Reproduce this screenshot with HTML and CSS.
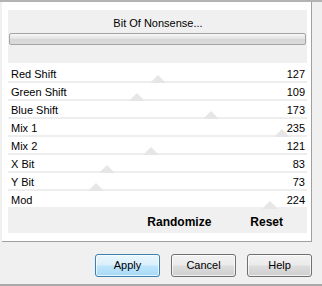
FILE: index.html
```html
<!DOCTYPE html>
<html>
<head>
<meta charset="utf-8">
<link rel="stylesheet" href="styles.css">
</head>
<body>
<div class="window">
  <div class="panel">
    <div class="head">
      <div class="title">Bit Of Nonsense...</div>
      <div class="progress"></div>
    </div>
    <div class="rows">
      <div class="row"><span class="thumb" style="left:142px"></span><span class="lbl">Red Shift</span><span class="val">127</span></div>
      <div class="row"><span class="thumb" style="left:121px"></span><span class="lbl">Green Shift</span><span class="val">109</span></div>
      <div class="row"><span class="thumb" style="left:195px"></span><span class="lbl">Blue Shift</span><span class="val">173</span></div>
      <div class="row"><span class="thumb" style="left:266px"></span><span class="lbl">Mix 1</span><span class="val">235</span></div>
      <div class="row"><span class="thumb" style="left:135px"></span><span class="lbl">Mix 2</span><span class="val">121</span></div>
      <div class="row"><span class="thumb" style="left:91px"></span><span class="lbl">X Bit</span><span class="val">83</span></div>
      <div class="row"><span class="thumb" style="left:80px"></span><span class="lbl">Y Bit</span><span class="val">73</span></div>
      <div class="row"><span class="thumb" style="left:254px"></span><span class="lbl">Mod</span><span class="val">224</span></div>
    </div>
    <div class="actions">
      <span class="act">Randomize</span>
      <span class="act">Reset</span>
    </div>
  </div>
  <div class="buttons">
    <div class="btn default">Apply</div>
    <div class="btn">Cancel</div>
    <div class="btn">Help</div>
  </div>
</div>
</body>
</html>
```

FILE: styles.css
```css
html, body {
  margin: 0;
  padding: 0;
  background: #f0f0f0;
}
body {
  font-family: "Liberation Sans", Arial, sans-serif;
  font-size: 11px;
  color: #000;
}
.window {
  width: 322px;
  height: 286px;
  box-sizing: border-box;
  border-top: 2px solid #b3b3b3;
  border-bottom: 2px solid #a9a9a9;
  overflow: hidden;
}
.panel {
  margin-left: 2px;
  width: 310px;
  height: 240px;
  box-sizing: border-box;
  background: #fff;
  border-right: 1px solid #a0a0a0;
  border-bottom: 1px solid #a0a0a0;
  padding: 8px 4px 0 6px;
}
.head {
  height: 53px;
  background: #f0f0f0;
  box-sizing: border-box;
  padding-top: 7px;
}
.title {
  text-align: center;
  line-height: 12px;
  height: 16px;
  padding-left: 1px;
}
.progress {
  margin: 0 1px;
  height: 12px;
  box-sizing: border-box;
  border: 1px solid #a4a4a4;
  border-radius: 2px;
  background: linear-gradient(#f7f7f7 0%, #e4e4e4 45%, #d6d6d6 55%, #dcdcdc 100%);
}
.rows {
  margin-top: 2px;
}
.row {
  position: relative;
  height: 18px;
  box-sizing: border-box;
  border-bottom: 2px solid #eeeeee;
  padding: 3px 2px 0 3px;
  line-height: 13px;
  display: flex;
  justify-content: space-between;
}
.row:last-child {
  border-bottom-color: #f0f0f0;
}
.lbl, .val {
  position: relative;
  z-index: 1;
}
.thumb {
  position: absolute;
  bottom: -2px;
  width: 0;
  height: 0;
  border-left: 8px solid transparent;
  border-right: 8px solid transparent;
  border-bottom: 8px solid #e6e6e6;
}
.actions {
  height: 24px;
  box-sizing: border-box;
  background: #f0f0f0;
  display: flex;
  justify-content: flex-end;
  gap: 39px;
  padding: 3px 24px 0 0;
  line-height: 21px;
  font-size: 12px;
  font-weight: bold;
}
.buttons {
  display: flex;
  justify-content: flex-end;
  gap: 11px;
  padding: 12px 10px 0 0;
}
.btn {
  width: 65px;
  height: 23px;
  box-sizing: border-box;
  border: 1px solid #707070;
  border-radius: 3px;
  text-align: center;
  line-height: 21px;
  background: linear-gradient(#f2f2f2 0%, #ebebeb 48%, #dddddd 52%, #cfcfcf 100%);
  box-shadow: inset 0 0 0 1px rgba(255,255,255,0.7);
}
.btn.default {
  border-color: #3c7fb1;
  background: linear-gradient(#eaf6fd 0%, #d9f0fc 48%, #bee6fd 52%, #a7d9f5 100%);
}
```
